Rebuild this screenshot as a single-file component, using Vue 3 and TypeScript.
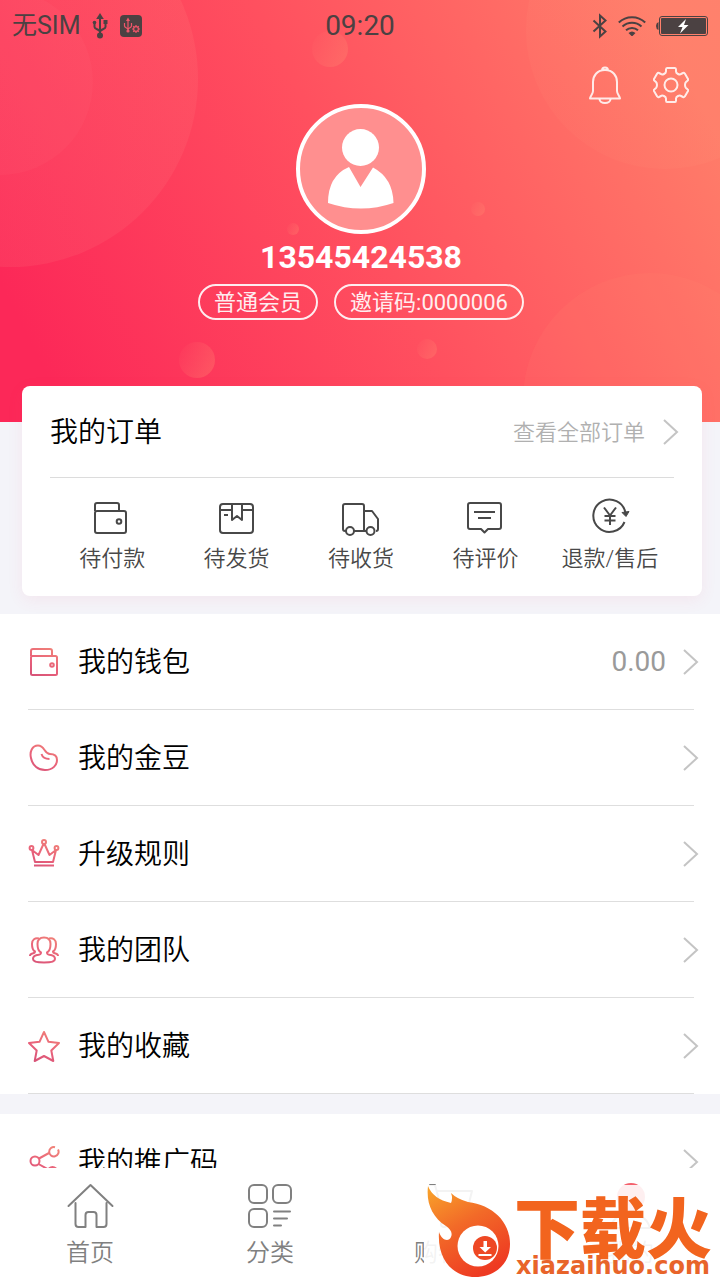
<script setup lang="ts">
interface Item {
  id: string
  label: string
  value?: string
}

const orders: Item[] = [
  { id: 'pay', label: '待付款' },
  { id: 'ship', label: '待发货' },
  { id: 'receive', label: '待收货' },
  { id: 'review', label: '待评价' },
  { id: 'refund', label: '退款/售后' },
]

const groups: Item[][] = [
  [
    { id: 'wallet', label: '我的钱包', value: '0.00' },
    { id: 'bean', label: '我的金豆' },
    { id: 'crown', label: '升级规则' },
    { id: 'team', label: '我的团队' },
    { id: 'star', label: '我的收藏' },
  ],
  [{ id: 'share', label: '我的推广码' }],
]

const tabs: Item[] = [
  { id: 'home', label: '首页' },
  { id: 'category', label: '分类' },
  { id: 'cart', label: '购物车' },
  { id: 'mine', label: '我的' },
]
</script>

<template>
  <div class="app">
    <main class="scroll">
      <header class="hero">
        <svg class="bubbles" viewBox="0 0 720 422" preserveAspectRatio="xMidYMid slice" aria-hidden="true">
          <defs>
            <linearGradient id="heroBg" gradientUnits="userSpaceOnUse" x1="60" y1="400" x2="690" y2="80">
              <stop offset="0" stop-color="#fc2858" />
              <stop offset="0.5" stop-color="#ff505f" />
              <stop offset="1" stop-color="#ff7c69" />
            </linearGradient>
            <linearGradient id="bigLeft" x1="0" y1="0" x2="0.3" y2="1">
              <stop offset="0" stop-color="#ff8a78" stop-opacity="0.2" />
              <stop offset="1" stop-color="#ff7a80" stop-opacity="0.16" />
            </linearGradient>
            <linearGradient id="fadeUp" x1="0" y1="1" x2="1" y2="0">
              <stop offset="0" stop-color="#ffa080" stop-opacity="0.04" />
              <stop offset="1" stop-color="#ffa080" stop-opacity="0.2" />
            </linearGradient>
            <linearGradient id="drop" x1="0" y1="0" x2="1" y2="0.6">
              <stop offset="0" stop-color="#ff8a78" stop-opacity="0" />
              <stop offset="1" stop-color="#ff8a70" stop-opacity="0.32" />
            </linearGradient>
          </defs>
          <rect width="720" height="422" fill="url(#heroBg)" />
          <circle cx="10" cy="79" r="188" fill="url(#bigLeft)" />
          <circle cx="0" cy="82" r="93" fill="#ff6a78" fill-opacity="0.12" />
          <circle cx="665" cy="30" r="139" fill="url(#fadeUp)" />
          <circle cx="650" cy="400" r="127" fill="#ff9078" fill-opacity="0.1" />
          <circle cx="330" cy="49" r="18" fill="url(#drop)" />
          <circle cx="478" cy="209" r="7" fill="url(#drop)" />
          <circle cx="293" cy="229" r="6" fill="url(#drop)" />
          <circle cx="197" cy="360" r="18" fill="url(#drop)" />
          <circle cx="427" cy="349" r="10" fill="url(#drop)" />
        </svg>

        <div class="status">
          <div class="status-left">
            <span class="carrier">无SIM</span>
            <svg width="16" height="26" viewBox="0 0 16 26" fill="none" stroke="#4b4142" stroke-width="2">
              <path d="M8 4v18M2.500 10v4c0 2.500 5.500 2 5.500 5M13.500 9v5c0 2.500-5.500 2-5.500 5" />
              <path d="M8 0l3.800 6H4.200z" fill="#4b4142" stroke="none" />
              <circle cx="8" cy="22.500" r="3" fill="#4b4142" stroke="none" />
              <circle cx="2.500" cy="9.500" r="1.800" fill="#4b4142" stroke="none" />
              <path d="M11.500 7h4v4h-4z" fill="#4b4142" stroke="none" />
            </svg>
            <svg width="22" height="22" viewBox="0 0 22 22" fill="none" stroke="#f0566a" stroke-width="1.200">
              <rect width="22" height="22" rx="4" fill="#4b4142" stroke="none" />
              <path d="M8 5v11M4.500 8v3c0 2 3.500 1.500 3.500 4M11.500 8v3c0 2-3.500 1.500-3.500 4" />
              <path d="M8 2.500l2 3.500H6z" fill="#f0566a" stroke="none" />
              <circle cx="8" cy="16" r="1.600" fill="#f0566a" stroke="none" />
              <circle cx="16" cy="14" r="2.400" />
              <path d="M16 10v1.500M16 16.500V18M12 14h1.500M18.500 14H20M13.200 11.200l1 1M17.800 15.800l1 1M18.800 11.200l-1 1M14.200 15.800l-1 1" />
            </svg>
          </div>
          <time class="clock">09:20</time>
          <div class="status-right">
            <svg width="16" height="26" viewBox="0 0 16 26" fill="none" stroke="#4b4142" stroke-width="2">
              <path d="M1.500 7.500l12 11L8 23.500V2.500l5.500 5-12 11" />
            </svg>
            <svg width="28" height="20" viewBox="0 0 28 20" fill="none" stroke="#4b4142" stroke-width="2">
              <path d="M0.800 6.500a19 19 0 0 1 26.400 0M4.500 10.500a14 14 0 0 1 19 0M8 14.200a9 9 0 0 1 12 0" />
              <path d="M10.500 17q3.500-3 7 0L14 20.500z" fill="#4b4142" stroke="none" />
            </svg>
            <svg width="52" height="20" viewBox="0 0 52 20">
              <path d="M2.500 6v8q-2.500-1-2.500-4t2.500-4z" fill="#4b4142" />
              <rect x="3.500" y="0.500" width="48" height="19" rx="2.500" fill="none" stroke="#4b4142" />
              <rect x="5" y="2" width="45" height="16" rx="1" fill="#4b4142" />
              <path d="M30 3l-8 8h4.500l-2.500 6.500 8.500-8.500h-4.500z" fill="#fff" />
            </svg>
          </div>
        </div>

        <div class="actions">
          <button type="button" aria-label="消息">
            <svg width="32" height="38" viewBox="0 0 32 38" fill="none" stroke="#fff" stroke-opacity="0.850" stroke-width="2" stroke-linejoin="round">
              <path d="M13 4.500a3 3 0 1 1 6 0M16 4C8 4 4 10 4 16v9c0 3-3 5.500-3 7.500h30c0-2-3-4.500-3-7.500v-9C28 10 24 4 16 4z" />
              <path d="M10.500 33a5.500 4 0 0 0 11 0" />
            </svg>
          </button>
          <button type="button" aria-label="设置">
            <svg width="36" height="38" viewBox="0 0 36 38" fill="none" stroke="#fff" stroke-opacity="0.850" stroke-width="2" stroke-linejoin="round">
              <path d="M14 2h8q1 0 1 1.500v2q0 1.500 2 2.500t3 0l2-1q1-.5 1.800.5l3.200 5.500q.5 1-.5 1.700l-1.500 1.300q-1 1-1 3t1 3l1.500 1.300q1 .700.5 1.700l-3.200 5.500q-.8 1-1.800.5l-2-1q-1-1-3 0t-2 2.500v2q0 1.500-1 1.500h-8q-1 0-1-1.500v-2q0-1.500-2-2.500t-3 0l-2 1q-1 .5-1.800-.5L1 25q-.5-1 .5-1.700L3 22q1-1 1-3t-1-3l-1.500-1.300Q.5 14 1 13l3.200-5.500Q5 6.500 6 7l2 1q1 1 3 0t2-2.500v-2Q13 2 14 2z" />
              <circle cx="18" cy="19" r="6.500" />
            </svg>
          </button>
        </div>

        <div class="profile">
          <svg class="avatar" viewBox="0 0 130 130" role="img" aria-label="头像">
            <circle cx="65" cy="65" r="63" fill="#ff8f8f" stroke="#fff" stroke-width="4" />
            <circle cx="64.500" cy="43.500" r="18.500" fill="#fff" />
            <path d="M53 63L64.500 83 77 63.500Q97 74 97.500 99 65 110 32 99 32 72 53 63z" fill="#fff" />
          </svg>
          <h1 class="phone">13545424538</h1>
          <div class="chips">
            <span class="chip">普通会员</span>
            <span class="chip">邀请码:0000006</span>
          </div>
        </div>
      </header>

      <section class="card">
        <div class="card-head">
          <h2>我的订单</h2>
          <a class="all" href="#orders">
            <span>查看全部订单</span>
            <svg class="chevron" viewBox="0 0 16 26"><path d="M1 1l13 12L1 25" /></svg>
          </a>
        </div>
        <nav class="orders" aria-label="我的订单">
          <a v-for="o in orders" :key="o.id" class="order" :href="'#' + o.id">
            <svg class="order-icon" viewBox="0 0 40 40">
              <g v-if="o.id === 'pay'">
                <path d="M3 13V7q0-2 2-2h20q2 0 2 2v6" />
                <rect x="3" y="13" width="31" height="22" rx="2" />
                <circle cx="27" cy="23.500" r="2.300" />
              </g>
              <g v-else-if="o.id === 'ship'">
                <rect x="3" y="6" width="33" height="29" rx="3" />
                <path d="M3 12h12M25 12h11M15 6v16l5-4 5 4V6M7 17h4" />
              </g>
              <g v-else-if="o.id === 'receive'">
                <path d="M5 33H4q-2 0-2-2V8q0-2 2-2h17q2 0 2 2v25M13 33h12M23 13h8l6 8v10q0 2-2 2" />
                <circle cx="9" cy="33" r="4" />
                <circle cx="29.500" cy="33" r="4" />
              </g>
              <g v-else-if="o.id === 'review'">
                <path d="M5 5h29q2 0 2 2v22q0 2-2 2H23l-3.500 3.500L16 31H5q-2 0-2-2V7q0-2 2-2zM9 14h21M13 20h13" />
              </g>
              <g v-else>
                <path d="M34.500 24A16.200 16.200 0 1 1 35.500 15" />
                <path d="M32 14.500l7-1-3 5z" fill="#484848" stroke-width="1" />
                <path d="M14 9.500l6 8 6-8M20 17.500V27M14.500 18h11M14.500 22.500h11" />
              </g>
            </svg>
            <span>{{ o.label }}</span>
          </a>
        </nav>
      </section>

      <nav v-for="(group, i) in groups" :key="i" class="list">
        <a v-for="row in group" :key="row.id" class="row" :href="'#' + row.id">
          <svg class="row-icon" viewBox="0 0 32 32">
            <defs>
              <linearGradient :id="'ink-' + row.id" gradientUnits="userSpaceOnUse" x1="24" y1="2" x2="10" y2="31">
                <stop offset="0" stop-color="#f08078" />
                <stop offset="0.6" stop-color="#e8607a" />
                <stop offset="1" stop-color="#d85478" />
              </linearGradient>
            </defs>
            <g :stroke="'url(#ink-' + row.id + ')'">
              <g v-if="row.id === 'wallet'">
                <path d="M3 10V5q0-2 2-2h17q2 0 2 2v5" />
                <rect x="3" y="10" width="26" height="19" rx="1.500" />
                <circle cx="24" cy="19" r="1.800" />
              </g>
              <path
                v-else-if="row.id === 'bean'"
                d="M10 3.500C4 3.500 1.500 10 3 16c1.500 8 7.500 12 14 12 8 0 12-5 12-10 0-4-3-6-7-6-6 0-5-8.500-12-8.500zM13.500 12q1.500 5 8 5"
              />
              <g v-else-if="row.id === 'crown'">
                <circle cx="3.500" cy="10" r="1.900" />
                <circle cx="16" cy="4" r="2" />
                <circle cx="28.500" cy="10" r="1.900" />
                <path d="M4 12l3 12h18l3-12-6.500 5L16.500 6h-1L10.500 17zM6 27.500h20" />
              </g>
              <g v-else-if="row.id === 'team'">
                <path d="M13 18.500C10 17 9.500 13 9.500 10c0-4 2.500-6.500 6.500-6.500s6.500 2.500 6.500 6.500c0 3-.5 7-3.500 8.500 0 2 1 2 4 2.500 3 .6 4 2 4 4 0 2.500-4 3.500-11 3.500S5 27.500 5 25c0-2 1-3.400 4-4 3-.5 4-.5 4-2.500z" />
                <path d="M11 4.500C7 3.500 4 5.500 4 10q0 6 3 7.500Q7 19 4.500 19.500 2 20 2 22M21 4.500c4-1 7 1 7 5.500q0 6-3 7.500 0 1.500 2.500 2 2.500.5 2.500 2.500" />
              </g>
              <path
                v-else-if="row.id === 'star'"
                d="M16 2l4.500 9.800L31 13l-7.700 7.500 2 10.500L16 26l-9.300 5 2-10.500L1 13l10.500-1.200z"
              />
              <g v-else>
                <circle cx="7" cy="15" r="4.500" />
                <path d="M30 3.500a4.700 4.700 0 1 1-3-2.300M11 12.500l10-5.500M10.500 18l9 5" />
                <circle cx="24.500" cy="25.500" r="4.500" />
              </g>
            </g>
          </svg>
          <span class="row-label">{{ row.label }}</span>
          <span v-if="row.value" class="row-value">{{ row.value }}</span>
          <svg class="chevron" viewBox="0 0 16 26"><path d="M1 1l13 12L1 25" /></svg>
        </a>
      </nav>
    </main>

    <nav class="tabbar">
      <a v-for="t in tabs" :key="t.id" class="tab" :href="'#' + t.id">
        <svg class="tab-icon" viewBox="0 0 48 48">
          <path
            v-if="t.id === 'home'"
            d="M2.500 24L24.500 3l22 21M9.500 21v21q0 3 3 3h7V33q0-3 3-3h5q3 0 3 3v12h7q3 0 3-3V21"
          />
          <g v-else-if="t.id === 'category'">
            <rect x="3" y="3" width="18" height="18" rx="5" />
            <rect x="27" y="3" width="18" height="18" rx="5" />
            <rect x="3" y="27" width="18" height="18" rx="5" />
            <path d="M28 29.500h16M28 36.500h13M28 43.500h7" />
          </g>
          <g v-else-if="t.id === 'cart'">
            <path d="M4 3h5l7 26h25l5-20H11M16 29l-3 7h30" />
            <circle cx="18" cy="42" r="3" />
            <circle cx="37" cy="42" r="3" />
          </g>
          <g v-else>
            <circle cx="25" cy="15" r="14" fill="#f4606c" stroke="none" />
            <path d="M4 46q4-14 20-14t20 14z" />
          </g>
        </svg>
        <span>{{ t.label }}</span>
      </a>
    </nav>

    <aside class="mark">
      <svg class="flame" viewBox="0 0 88 94" aria-hidden="true">
        <defs>
          <linearGradient id="fire" x1="0.1" y1="0" x2="0.6" y2="1">
            <stop offset="0" stop-color="#f8a02a" />
            <stop offset="0.45" stop-color="#f26a28" />
            <stop offset="1" stop-color="#ee3a22" />
          </linearGradient>
        </defs>
        <path
          d="M4 1Q9 14 27 18 29 13 27 8 33 14 44 17C68 20 86 36 86 59 86 79 71 92 51 92 30 92 13 76 15 47 18 56 25 57 27 52 29 47 26 44 22 41 8 32 2 18 4 1z"
          fill="url(#fire)"
        />
        <circle cx="54" cy="61" r="20.500" fill="#fff" />
        <circle cx="61" cy="63" r="12" fill="#ee4824" />
        <path d="M59.500 56h3.500v6h4l-5.800 5.500L55.500 62h4zM54.500 69h13v2h-13z" fill="#fff" />
      </svg>
      <div class="mark-text">
        <strong>下载火</strong>
        <span>xiazaihuo.com</span>
      </div>
    </aside>
  </div>
</template>

<style>
body {
  margin: 0;
}
</style>

<style scoped>
.app {
  position: relative;
  display: flex;
  flex-direction: column;
  height: 100vh;
  overflow: hidden;
  background: #f4f4f9;
  font-family: Roboto, "Noto Sans CJK SC", sans-serif;
  color: #000;
}
.app * {
  box-sizing: border-box;
}
a {
  color: inherit;
  text-decoration: none;
}
svg {
  display: block;
  flex: none;
}
.scroll {
  flex: 1;
  min-height: 0;
  overflow: hidden;
}
.hero {
  position: relative;
  padding-bottom: 102px;
  background: #ff505f;
}
.bubbles {
  position: absolute;
  inset: 0;
  width: 100%;
  height: 100%;
}
.status,
.actions,
.profile {
  position: relative;
}
.status {
  display: grid;
  grid-template-columns: 1fr auto 1fr;
  align-items: center;
  height: 48px;
  padding: 0 12px;
  color: #4b4142;
}
.status-left,
.status-right {
  display: flex;
  align-items: center;
}
.status-left {
  gap: 12px;
}
.status-right {
  justify-content: flex-end;
  gap: 10px;
}
.carrier {
  font-size: 25px;
  line-height: 48px;
}
.clock {
  font-size: 28px;
  line-height: 52px;
}
.actions {
  display: flex;
  justify-content: flex-end;
  gap: 32px;
  height: 56px;
  padding: 18px 31px 0 0;
}
.actions button {
  padding: 0;
  border: 0;
  background: none;
  cursor: pointer;
}
.profile {
  display: flex;
  flex-direction: column;
  align-items: center;
  padding-left: 2px;
  color: #fff;
}
.avatar {
  width: 130px;
  height: 130px;
}
.phone {
  margin: 0 0 4px;
  font-size: 32px;
  line-height: 46px;
  font-weight: 700;
}
.chips {
  display: flex;
  gap: 16px;
}
.chip {
  height: 36px;
  padding: 0 14px;
  border: 2px solid #fff;
  border-radius: 18px;
  font-size: 22px;
  line-height: 34px;
  opacity: 0.9;
}
.card {
  position: relative;
  margin: -36px 18px 18px 22px;
  padding: 0 28px 20px;
  border-radius: 8px;
  background: #fff;
  box-shadow: 0 4px 16px rgba(240, 80, 110, 0.08);
}
.card-head {
  display: flex;
  align-items: center;
  justify-content: space-between;
  height: 92px;
  border-bottom: 1px solid #dcdcdc;
}
.card-head h2 {
  margin: 0;
  padding-bottom: 4px;
  font-size: 28px;
  font-weight: 350;
}
.all {
  display: flex;
  align-items: center;
  gap: 18px;
  color: #b0b0b0;
  font-size: 22px;
  font-weight: 350;
}
.all span {
  padding-bottom: 4px;
}
.chevron {
  width: 16px;
  height: 26px;
  margin-right: -5px;
  fill: none;
  stroke: #c4c4c4;
  stroke-width: 2;
}
.orders {
  display: grid;
  grid-template-columns: repeat(5, 1fr);
  margin-right: 2px;
  padding-top: 20px;
}
.order {
  display: flex;
  flex-direction: column;
  align-items: center;
  gap: 4px;
  color: #484848;
  font-size: 22px;
  line-height: 34px;
  font-weight: 350;
  white-space: nowrap;
}
.order-icon {
  width: 40px;
  height: 40px;
  fill: none;
  stroke: #484848;
  stroke-width: 2;
  stroke-linejoin: round;
}
.list {
  margin-bottom: 20px;
  padding: 0 26px 0 28px;
  background: #fff;
}
.row {
  display: flex;
  align-items: center;
  height: 96px;
  border-bottom: 1px solid #dedede;
  font-size: 28px;
}
.row-icon {
  width: 32px;
  height: 32px;
  margin-right: 18px;
  fill: none;
  stroke-width: 2;
  stroke-linejoin: round;
}
.row-label {
  flex: 1;
  padding-bottom: 4px;
  font-weight: 350;
}
.row-value {
  margin-right: 17px;
  color: #9a9a9a;
}
.tabbar {
  display: grid;
  grid-template-columns: repeat(4, 1fr);
  height: 112px;
  padding-top: 14px;
  background: #fff;
}
.tab {
  display: flex;
  flex-direction: column;
  align-items: center;
  gap: 6px;
  color: #808080;
  font-size: 24px;
  line-height: 34px;
  font-weight: 350;
}
.tab-icon {
  width: 48px;
  height: 48px;
  fill: none;
  stroke: #808080;
  stroke-width: 2;
  stroke-linejoin: round;
  stroke-linecap: round;
}
.mark {
  position: absolute;
  right: 4px;
  bottom: 0;
  display: flex;
  height: 95px;
  padding-right: 2px;
  background: rgba(255, 255, 255, 0.9);
}
.flame {
  width: 88px;
  height: 94px;
}
.mark-text {
  display: flex;
  flex-direction: column;
  align-items: center;
  min-width: 202px;
  padding-top: 10px;
  color: #f2641e;
}
.mark-text strong {
  font-family: "Noto Sans CJK SC", sans-serif;
  font-size: 66px;
  line-height: 58px;
  font-weight: 900;
}
.mark-text span {
  color: #e8642a;
  font-family: "DejaVu Sans", sans-serif;
  font-size: 24px;
  line-height: 26px;
  font-weight: 700;
}
</style>
